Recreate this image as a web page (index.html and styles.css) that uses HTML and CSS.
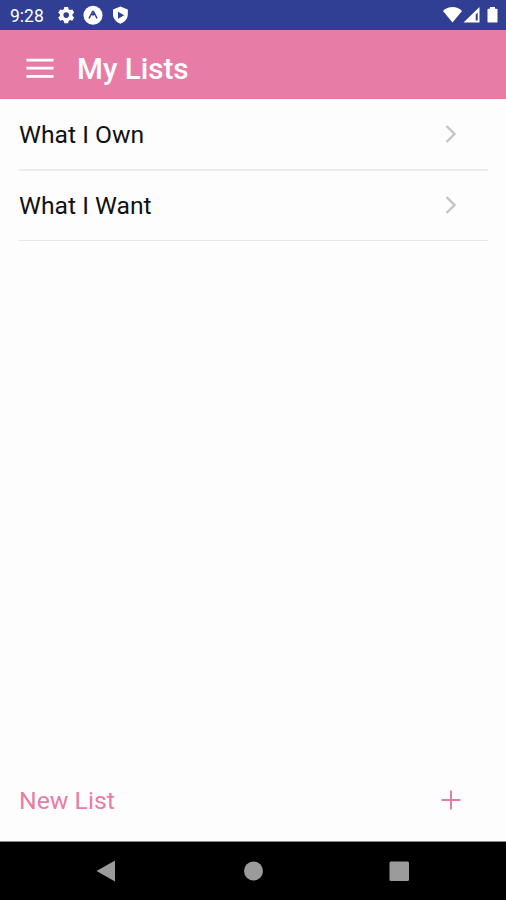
FILE: index.html
```html
<!DOCTYPE html>
<html lang="en">
<head>
<meta charset="utf-8">
<title>My Lists</title>
<link rel="stylesheet" href="styles.css">
</head>
<body>
<div class="screen">
  <div class="status">
    <span class="time">9:28</span>
    <svg class="notifications" width="74" height="30" viewBox="0 0 74 30" fill="#fff">
      <path fill-rule="evenodd" d="M6.3 7h3.8l.5 2.2 1.5.9 2.2-.7 1.9 3.2-1.7 1.6v1.8l1.7 1.6-1.9 3.2-2.2-.7-1.5.9-.5 2.2H6.3l-.5-2.2-1.5-.9-2.2.7-1.9-3.2 1.7-1.6v-1.8L.2 12.600l1.900-3.200 2.200.7 1.500-.9zM8.200 12.300a2.800 2.800 0 1 0 0 5.600 2.800 2.800 0 0 0 0-5.600z"/>
      <circle cx="35" cy="15.300" r="9.500"/>
      <path d="M31 18.500l3.600-7h.9l3.600 7M34.200 15.300l.9-1.200.9 1.200" fill="none" stroke="#303f93" stroke-width="1.500"/>
      <path d="M62.400 6.500l7.400 3v5c0 4.200-3.200 7.700-7.400 9.200-4.200-1.500-7.400-5-7.400-9.200v-5z"/>
      <path d="M60 11.800l6.200 3.500-6.200 3.500z" fill="#303f93"/>
    </svg>
    <svg class="signals" width="56" height="30" viewBox="0 0 56 30" fill="#fff">
      <path d="M0 11c5-5.300 14-5.300 19 0l-9.500 11.500z"/>
      <path fill-rule="evenodd" d="M36.500 7v15.500H20.500zM34.700 12.500l-2 2v6h2z"/>
      <path d="M44.500 9.500q0-.7.700-.7h1.800V7h5v1.800h1.800q.7 0 .7.700v12.300q0 .7-.7.700h-8.600q-.7 0-.7-.7z"/>
    </svg>
  </div>
  <header class="header">
    <svg width="28" height="22" viewBox="0 0 28 22" stroke="#fff" stroke-width="2.800"><path d="M.5 3.200h27M.5 11.200h27M.5 19.400h27"/></svg>
    <h1>My Lists</h1>
  </header>
  <main class="lists">
    <div class="row"><span>What I Own</span><svg class="chevron" width="12" height="20" viewBox="0 0 12 20"><path d="M1.500 2l8 8-8 8"/></svg></div>
    <div class="row"><span>What I Want</span><svg class="chevron" width="12" height="20" viewBox="0 0 12 20"><path d="M1.500 2l8 8-8 8"/></svg></div>
  </main>
  <div class="new-list"><span>New List</span><svg width="20" height="20" viewBox="0 0 20 20" stroke="#e77da6" stroke-width="2"><path d="M.5 10h19M10 .5v19"/></svg></div>
  <nav class="nav">
    <svg width="506" height="58" viewBox="0 0 506 58" fill="#9b9b9b"><path d="M96.500 29L115 18.500v21z"/><circle cx="253.500" cy="29" r="9.500"/><rect x="389.500" y="19.500" width="19.500" height="19.500" rx="1.500"/></svg>
  </nav>
</div>
</body>
</html>
```
FILE: styles.css
```css
* { box-sizing: border-box; }
body { margin: 0; font-family: Roboto, sans-serif; }
svg { display: block; flex: none; }
.screen { width: 506px; height: 900px; display: flex; flex-direction: column; background: #fdfdfd; overflow: hidden; }
.status { height: 30px; display: flex; align-items: center; padding: 0 7px 0 10px; background: #303f93; color: #fff; }
.time { width: 48px; font-size: 17.5px; line-height: 30px; padding-top: 1px; }
.signals { margin-left: auto; }
.header { height: 69px; display: flex; align-items: center; gap: 23px; padding: 8px 26px 0; background: #e77da6; border-bottom: 1px solid #e276a0; color: #fff; }
h1 { margin: 0; font-size: 29.6px; line-height: 36px; font-weight: 500; padding-top: 1px; }
.lists { flex: 1; padding: 0 18px 0 19px; }
.row { display: flex; align-items: center; justify-content: space-between; padding-right: 31px; font-size: 24.7px; color: #111; }
.row:first-child { height: 72px; border-bottom: 2px solid #ececec; }
.row:last-child { height: 70px; padding-bottom: 2px; border-bottom: 1px solid #e6e6e6; }
.row span { padding-top: 1px; }
.chevron { fill: none; stroke: #c5c5c5; stroke-width: 2.4; }
.new-list { height: 83px; display: flex; align-items: center; justify-content: space-between; padding: 0 45px 0 19px; font-size: 24.8px; color: #e77da6; }
.new-list span { padding-top: 2px; }
.nav { height: 59px; background: #000; border-top: 1px solid #858585; }
```
